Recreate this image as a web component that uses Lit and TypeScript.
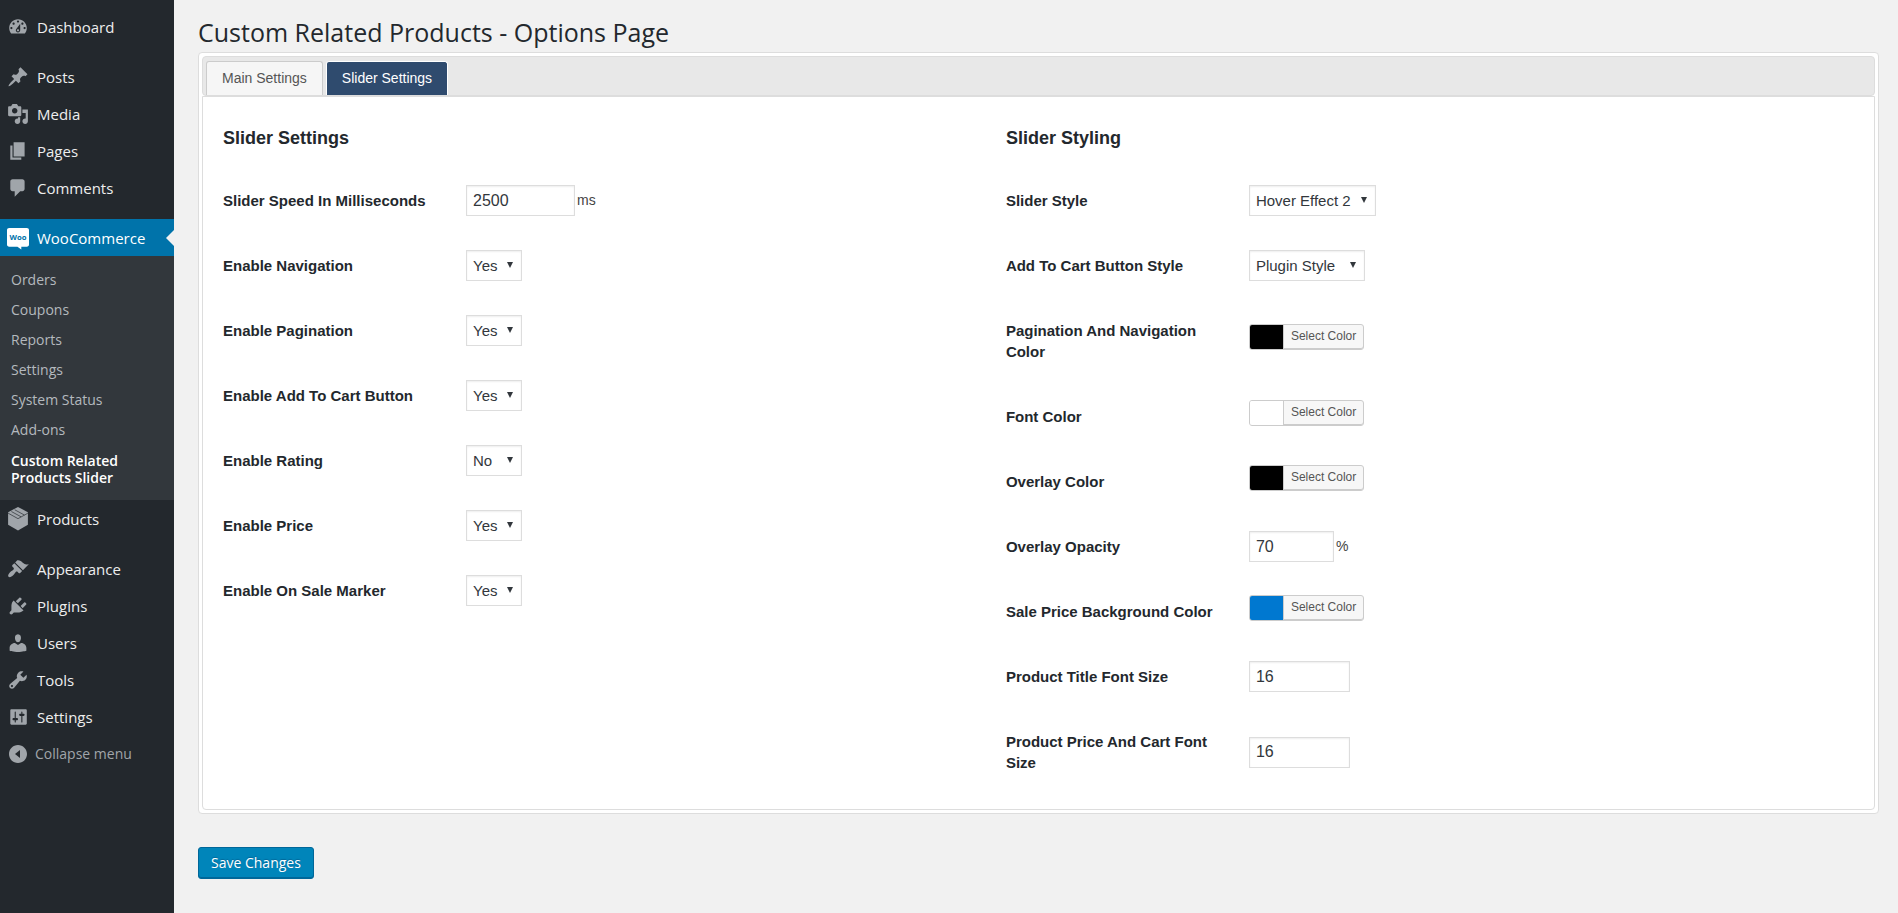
import { LitElement, html, svg, css, nothing } from "lit";
import { customElement, property, state } from "lit/decorators.js";
import { classMap } from "lit/directives/class-map.js";
import { styleMap } from "lit/directives/style-map.js";

const icons: Record<string, unknown> = {
  dashboard: svg`<path fill-rule="evenodd" d="M3.76 16h12.48c1.1-1.37 1.76-3.11 1.76-5 0-4.42-3.58-8-8-8s-8 3.58-8 8c0 1.89.66 3.63 1.76 5zM10 4c.55 0 1 .45 1 1s-.45 1-1 1-1-.45-1-1 .45-1 1-1zM6 6c.55 0 1 .45 1 1s-.45 1-1 1-1-.45-1-1 .45-1 1-1zm8 0c.55 0 1 .45 1 1s-.45 1-1 1-1-.45-1-1 .45-1 1-1zm-5.37 5.55L12 7v6c0 1.1-.9 2-2 2s-2-.9-2-2c0-.57.24-1.08.63-1.45zM4 10c.55 0 1 .45 1 1s-.45 1-1 1-1-.45-1-1 .45-1 1-1zm12 0c.55 0 1 .45 1 1s-.45 1-1 1-1-.45-1-1 .45-1 1-1zm-5 3c0-.55-.45-1-1-1s-1 .45-1 1 .45 1 1 1 1-.45 1-1z"/>`,
  posts: svg`<path d="M10.44 3.02l1.82-1.82 6.36 6.35-1.83 1.82c-1.05-.68-2.48-.57-3.41.36l-.75.75c-.92.93-1.04 2.35-.35 3.41l-1.83 1.82-2.41-2.41-2.8 2.79c-.42.42-3.38 2.71-3.8 2.29s1.86-3.39 2.28-3.81l2.79-2.79L4.1 9.36l1.83-1.82c1.05.69 2.48.57 3.4-.36l.75-.75c.93-.92 1.05-2.35.36-3.41z"/>`,
  media: svg`<path fill-rule="evenodd" d="M13 11V4c0-.55-.45-1-1-1h-1.67L9 1H5L3.67 3H2c-.55 0-1 .45-1 1v7c0 .55.45 1 1 1h10c.55 0 1-.45 1-1zM7 4.5c1.38 0 2.5 1.12 2.5 2.5S8.38 9.5 7 9.5 4.5 8.38 4.5 7 5.62 4.5 7 4.5zM14 6h5v10.5c0 1.38-1.12 2.5-2.5 2.5S14 17.88 14 16.5s1.12-2.5 2.5-2.5c.17 0 .34.02.5.05V9h-3V6zm-4 8.05V13h2v3.5c0 1.38-1.12 2.5-2.5 2.5S7 17.88 7 16.5 8.12 14 9.5 14c.17 0 .34.02.5.05z"/>`,
  pages: svg`<path d="M6 15V2h10v13H6zm-1 1h8v2H3V5h2v11z"/>`,
  comments: svg`<path d="M5 2h9c1.1 0 2 .9 2 2v7c0 1.1-.9 2-2 2h-2l-5 5v-5H5c-1.1 0-2-.9-2-2V4c0-1.1.9-2 2-2z"/>`,
  woo: svg`<path fill="#fff" d="M2 1h16c1.200 0 2 .8 2 2v13c0 1.200-.8 2-2 2h-5v2.500L9.500 18H2c-1.200 0-2-.8-2-2V3c0-1.200.8-2 2-2z"/><text class="woo" x="10" y="12" text-anchor="middle">Woo</text>`,
  products: svg`<path d="M10 -1l9 4.800v11.400l-9 5.300-9-5.300V3.800z"/><path class="seam" d="M1 4.700l9 5 9-5M4 3.200l8.800 4.800M7 1.600l8.800 4.800"/>`,
  appearance: svg`<path d="M14.48 11.06L7.41 3.99l1.500-1.500c.5-.56 2.300-.47 3.510.32 1.210.8 1.430 1.280 2.910 2.100 1.180.64 2.450 1.260 4.450.85zm-.71.71L6.700 4.700 4.930 6.470c-.39.39-.39 1.020 0 1.410l1.060 1.060c.39.39.39 1.030 0 1.420-.6.6-1.430 1.110-2.210 1.690-.35.26-.7.53-1.010.84C1.430 14.230.4 16.080 1.400 17.070c.99 1 2.840-.03 4.180-1.360.31-.31.58-.66.85-1.020.57-.78 1.080-1.610 1.690-2.210.39-.39 1.020-.39 1.410 0l1.060 1.060c.39.39 1.020.39 1.410 0z"/>`,
  plugins: svg`<path d="M13.11 4.36L9.87 7.6 8 5.73l3.24-3.24c.35-.34 1.05-.2 1.56.32.52.51.66 1.21.31 1.55zm-8 1.77l.91-1.12 9.01 9.01-1.19.84c-.71.71-2.63 1.16-3.82 1.16H6.14L4.9 17.26c-.59.59-1.54.59-2.12 0-.59-.58-.59-1.53 0-2.12l1.24-1.24v-3.88c0-1.13.4-3.19 1.09-3.89zm7.26 3.97l3.24-3.24c.34-.35 1.04-.21 1.55.31.52.51.66 1.21.31 1.55l-3.24 3.25z"/>`,
  users: svg`<path d="M10 9.250c-2.270 0-2.730-3.440-2.730-3.440C7 4.020 7.820 2 9.970 2c2.160 0 2.980 2.020 2.710 3.810 0 0-.41 3.440-2.680 3.440zm0 2.570L12.720 10c3 0 4.900 2.330 4.900 4.530v2.490s-3.800 1.130-7.620 1.130c-3.800 0-7.620-1.130-7.620-1.130v-2.490c0-2.250 2.100-4.480 4.850-4.480z"/>`,
  tools: svg`<path fill-rule="evenodd" d="M16.68 9.77c-1.34 1.34-3.3 1.67-4.95.99l-5.41 6.52c-.99.99-2.59.99-3.58 0s-.99-2.59 0-3.57l6.52-5.42c-.68-1.65-.35-3.61.99-4.95 1.28-1.28 3.12-1.62 4.72-1.06l-2.89 2.89 2.82 2.82 2.86-2.87c.53 1.58.18 3.39-1.08 4.65zM3.81 16.21c.4.39 1.04.39 1.43 0 .4-.4.4-1.04 0-1.43-.39-.4-1.03-.4-1.43 0-.39.39-.39 1.03 0 1.43z"/>`,
  settings: svg`<path fill-rule="evenodd" d="M18 16V4c0-.55-.45-1-1-1H4c-.55 0-1 .45-1 1v12c0 .55.45 1 1 1h13c.55 0 1-.45 1-1zM8 11h1c.55 0 1 .45 1 1s-.45 1-1 1H8v1.500c0 .28-.22.5-.5.5s-.5-.22-.5-.5V13H6c-.55 0-1-.45-1-1s.45-1 1-1h1V5.500c0-.28.22-.5.5-.5s.5.22.5.5V11zm5-2h-1c-.55 0-1-.45-1-1s.45-1 1-1h1V5.500c0-.28.22-.5.5-.5s.5.22.5.5V7h1c.55 0 1 .45 1 1s-.45 1-1 1h-1v5.500c0 .28-.22.5-.5.5s-.5-.22-.5-.5V9z"/>`,
  collapse: svg`<path fill-rule="evenodd" d="M10 1c5 0 9 4 9 9s-4 9-9 9-9-4-9-9 4-9 9-9zm2 13V6l-5 4z"/>`,
};

interface MenuEntry {
  icon: string;
  label: string;
  children?: string[];
}

const menuGroups: MenuEntry[][] = [
  [{ icon: "dashboard", label: "Dashboard" }],
  [
    { icon: "posts", label: "Posts" },
    { icon: "media", label: "Media" },
    { icon: "pages", label: "Pages" },
    { icon: "comments", label: "Comments" },
  ],
  [
    {
      icon: "woo",
      label: "WooCommerce",
      children: ["Orders", "Coupons", "Reports", "Settings", "System Status", "Add-ons", "Custom Related Products Slider"],
    },
    { icon: "products", label: "Products" },
  ],
  [
    { icon: "appearance", label: "Appearance" },
    { icon: "plugins", label: "Plugins" },
    { icon: "users", label: "Users" },
    { icon: "tools", label: "Tools" },
    { icon: "settings", label: "Settings" },
  ],
];

@customElement("admin-menu")
class AdminMenu extends LitElement {
  static styles = css`
    :host {
      display: block;
      background: #23282d;
      font: 15px/20px "Open Sans", sans-serif;
      padding-top: 8px;
    }
    ul {
      list-style: none;
      margin: 0 0 13px;
      padding: 0;
    }
    ul.last {
      margin: 0;
    }
    .item,
    .collapse {
      display: flex;
      align-items: center;
      gap: 8px;
      box-sizing: border-box;
      width: 100%;
      height: 37px;
      padding: 0 0 0 7px;
      color: #eee;
      text-decoration: none;
    }
    .collapse {
      gap: 6px;
      border: 0;
      background: none;
      font: inherit;
      font-size: 14px;
      color: #a0a5aa;
    }
    .icon {
      width: 22px;
      height: 22px;
      flex: none;
      fill: #a0a5aa;
      overflow: visible;
    }
    .collapse .icon {
      padding: 1px;
      box-sizing: border-box;
    }
    .seam {
      fill: none;
      stroke: #23282d;
      stroke-width: 0.6;
    }
    .woo {
      fill: #0073aa;
      font: bold 7px "Open Sans", sans-serif;
    }
    .current {
      position: relative;
      background: #0073aa;
      color: #fff;
    }
    .current::after {
      content: "";
      position: absolute;
      right: 0;
      top: 50%;
      margin-top: -8px;
      border: 8px solid transparent;
      border-left-width: 0;
      border-right-color: #f1f1f1;
    }
    .sub {
      margin: 0;
      padding: 9px 0 7px;
      background: #32373c;
    }
    .sub a {
      display: block;
      padding: 5px 11px;
      font-size: 14px;
      color: #b4b9be;
      text-decoration: none;
    }
    .sub .here {
      padding: 7px 11px;
      line-height: 17px;
      font-weight: 600;
      color: #fff;
    }
  `;

  private icon(name: string) {
    return html`<svg class="icon" viewBox="0 0 20 20" aria-hidden="true">${icons[name]}</svg>`;
  }

  private entry(e: MenuEntry) {
    const last = e.children ? e.children.length - 1 : 0;
    return html`<li>
      <a href="#" class=${classMap({ item: true, current: !!e.children })}>${this.icon(e.icon)}<span>${e.label}</span></a>
      ${e.children
        ? html`<ul class="sub">
            ${e.children.map((c, i) => html`<li><a href="#" class=${i === last ? "here" : ""}>${c}</a></li>`)}
          </ul>`
        : nothing}
    </li>`;
  }

  render() {
    return html`<nav aria-label="Main menu">
      ${menuGroups.map(
        (g, i) => html`<ul class=${i === menuGroups.length - 1 ? "last" : ""}>${g.map((e) => this.entry(e))}</ul>`,
      )}
      <button class="collapse" type="button">${this.icon("collapse")}<span>Collapse menu</span></button>
    </nav>`;
  }
}

interface Field {
  id: string;
  label: string;
  kind: "text" | "select" | "color";
  value: string;
  size?: string;
  unit?: string;
  options?: string[];
}

const yesNo = (id: string, label: string, value = "Yes"): Field => ({
  id, label, kind: "select", value, size: "short", options: ["Yes", "No"],
});

const sliderFields: Field[] = [
  { id: "speed", label: "Slider Speed In Milliseconds", kind: "text", value: "2500", size: "wide", unit: "ms" },
  yesNo("navigation", "Enable Navigation"),
  yesNo("pagination", "Enable Pagination"),
  yesNo("cart", "Enable Add To Cart Button"),
  yesNo("rating", "Enable Rating", "No"),
  yesNo("price", "Enable Price"),
  yesNo("sale", "Enable On Sale Marker"),
];

const stylingFields: Field[] = [
  { id: "style", label: "Slider Style", kind: "select", value: "Hover Effect 2", size: "long", options: ["Hover Effect 1", "Hover Effect 2"] },
  { id: "cart-style", label: "Add To Cart Button Style", kind: "select", value: "Plugin Style", size: "medium", options: ["Plugin Style", "Theme Style"] },
  { id: "nav-color", label: "Pagination And Navigation Color", kind: "color", value: "#000000" },
  { id: "font-color", label: "Font Color", kind: "color", value: "#ffffff" },
  { id: "overlay-color", label: "Overlay Color", kind: "color", value: "#000000" },
  { id: "opacity", label: "Overlay Opacity", kind: "text", value: "70", size: "narrow", unit: "%" },
  { id: "sale-color", label: "Sale Price Background Color", kind: "color", value: "#0078d0" },
  { id: "title-size", label: "Product Title Font Size", kind: "text", value: "16", size: "normal" },
  { id: "price-size", label: "Product Price And Cart Font Size", kind: "text", value: "16", size: "normal" },
];

@customElement("settings-group")
class SettingsGroup extends LitElement {
  @property() heading = "";
  @property({ attribute: false }) fields: Field[] = [];

  static styles = css`
    :host {
      display: block;
      color: #23282d;
      font: 15px/21px "Liberation Sans", Arial, sans-serif;
    }
    h3 {
      margin: 0 0 18px;
      font-size: 18px;
      line-height: 24px;
    }
    .row {
      display: grid;
      grid-template-columns: 243px 1fr;
      align-items: center;
    }
    .row > label {
      align-self: start;
      padding: 22px 20px 22px 0;
      font-size: 15px;
      font-weight: bold;
    }
    .control {
      display: flex;
      align-items: center;
      gap: 2px;
      color: #444;
    }
    .control.color {
      padding-bottom: 8px;
    }
    .unit {
      font-size: 14px;
    }
    input,
    select {
      box-sizing: border-box;
      height: 31px;
      margin: 0;
      padding: 0 6px;
      border: 1px solid #ddd;
      border-radius: 0;
      background-color: #fff;
      box-shadow: inset 0 1px 2px rgba(0, 0, 0, 0.07);
      color: #32373c;
      font: 16px "Liberation Sans", Arial, sans-serif;
    }
    select {
      font-size: 15px;
      appearance: none;
      background-image: url("data:image/svg+xml,%3Csvg xmlns='http://www.w3.org/2000/svg' width='6' height='6'%3E%3Cpath fill='%2332373c' d='M0 0h6L3 6z'/%3E%3C/svg%3E");
      background-repeat: no-repeat;
      background-position: right 8px top 11px;
    }
    .wide { width: 109px; }
    .normal { width: 101px; }
    .narrow { width: 85px; }
    .short { width: 56px; }
    .medium { width: 116px; }
    .long { width: 127px; }
    .picker {
      display: flex;
      box-sizing: border-box;
      height: 26px;
      padding: 0;
      border: 1px solid #ccc;
      border-radius: 3px;
      box-shadow: inset 0 -1px 0 #ccc;
      background: #f7f7f7;
      overflow: hidden;
      font: 12px/22px "Liberation Sans", Arial, sans-serif;
      color: #555;
    }
    .swatch {
      width: 33px;
      height: 24px;
    }
    .caption {
      padding: 0 7px;
      border-left: 1px solid #ccc;
      height: 23px;
    }
  `;

  private control(f: Field) {
    if (f.kind === "select") {
      return html`<select id=${f.id} class=${f.size ?? ""}>
        ${f.options?.map((o) => html`<option ?selected=${o === f.value}>${o}</option>`)}
      </select>`;
    }
    if (f.kind === "color") {
      return html`<button id=${f.id} class="picker" type="button">
        <span class="swatch" style=${styleMap({ background: f.value })}></span><span class="caption">Select Color</span>
      </button>`;
    }
    return html`<input id=${f.id} class=${f.size ?? ""} type="text" .value=${f.value} />${f.unit
        ? html`<span class="unit">${f.unit}</span>`
        : nothing}`;
  }

  render() {
    return html`<h3>${this.heading}</h3>
      ${this.fields.map(
        (f) => html`<div class="row">
          <label for=${f.id}>${f.label}</label>
          <div class=${classMap({ control: true, color: f.kind === "color" })}>${this.control(f)}</div>
        </div>`,
      )}`;
  }
}

@customElement("app-root")
class AppRoot extends LitElement {
  @state() private tab = "Slider Settings";

  static styles = css`
    :host {
      display: grid;
      grid-template-columns: 174px 1fr;
      min-height: 100vh;
      background: #f1f1f1;
    }
    main {
      padding: 15px 19px 0 24px;
      font-family: "Open Sans", sans-serif;
    }
    h1 {
      margin: 0 0 3px;
      font-size: 25px;
      line-height: 34px;
      font-weight: 400;
      color: #23282d;
    }
    .frame {
      padding: 3px;
      border: 1px solid #ddd;
      border-radius: 4px;
      background: #fff;
    }
    .tabs {
      display: flex;
      align-items: flex-end;
      gap: 3px;
      box-sizing: border-box;
      height: 40px;
      padding: 0 3px;
      border: 1px solid #ddd;
      border-radius: 4px;
      background: #e8e8e8;
    }
    .tab {
      box-sizing: border-box;
      height: 34px;
      padding: 0 15px 2px;
      border: 1px solid #ccc;
      border-bottom: 0;
      border-radius: 3px 3px 0 0;
      background: #f6f6f6;
      color: #555;
      font: 14px "Liberation Sans", Arial, sans-serif;
    }
    .tab.active {
      border-color: #fff;
      background: #2f4b6e;
      color: #fff;
    }
    .panel {
      display: grid;
      grid-template-columns: 48% 48%;
      align-items: start;
      padding: 29px 20px 14px;
      border: 1px solid #ddd;
      border-radius: 0 0 4px 4px;
    }
    .save {
      box-sizing: border-box;
      height: 32px;
      margin-top: 33px;
      padding: 0 12px 2px;
      border: 1px solid #006799;
      border-radius: 3px;
      background: #0085ba;
      box-shadow: inset 0 -1px 0 #006799;
      color: #fff;
      font: 14px "Open Sans", sans-serif;
      text-shadow: 0 -1px 1px #006799;
    }
  `;

  render() {
    return html`<admin-menu></admin-menu>
      <main>
        <h1>Custom Related Products - Options Page</h1>
        <div class="frame">
          <div class="tabs" role="tablist">
            ${["Main Settings", "Slider Settings"].map(
              (t) => html`<button
                type="button"
                role="tab"
                aria-selected=${t === this.tab}
                class=${classMap({ tab: true, active: t === this.tab })}
                @click=${() => (this.tab = t)}
              >${t}</button>`,
            )}
          </div>
          <div class="panel" role="tabpanel">
            <settings-group heading="Slider Settings" .fields=${sliderFields}></settings-group>
            <settings-group heading="Slider Styling" .fields=${stylingFields}></settings-group>
          </div>
        </div>
        <button class="save" type="button">Save Changes</button>
      </main>`;
  }
}
